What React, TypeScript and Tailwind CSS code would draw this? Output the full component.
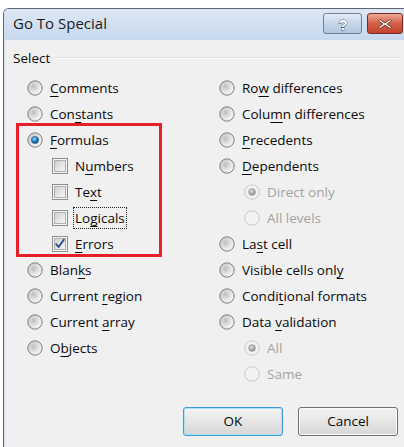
import type { ReactNode } from 'react';

type Opt = { label: string; checked?: boolean; disabled?: boolean; nested?: boolean; focus?: boolean };

// "&" marks the access key letter, as in Win32 resource strings
function AccessLabel({ text }: { text: string }) {
  const i = text.indexOf('&');
  if (i < 0) return <>{text}</>;
  return (
    <>
      {text.slice(0, i)}
      <span className="underline decoration-1 underline-offset-[3px]">{text[i + 1]}</span>
      {text.slice(i + 2)}
    </>
  );
}

function RadioMark({ checked, disabled }: { checked?: boolean; disabled?: boolean }) {
  return (
    <svg width="16" height="16" viewBox="0 0 16 16" className="shrink-0">
      <circle cx="8" cy="8" r="7.2" fill={disabled ? '#f4f4f4' : 'url(#rbFace)'} stroke={disabled ? '#c9c9c9' : '#7f8080'} strokeWidth="1" />
      <circle cx="8" cy="8" r="5.4" fill={disabled ? '#f2f2f2' : 'url(#rbInner)'} />
      {checked && !disabled && <circle cx="8" cy="8" r="3.6" fill="url(#rbDot)" stroke="#1c4d7e" strokeWidth="0.6" />}
      {checked && disabled && <circle cx="8" cy="8" r="3.4" fill="url(#rbDotOff)" stroke="#8a8a8a" strokeWidth="0.5" />}
    </svg>
  );
}

function CheckMark({ checked }: { checked?: boolean }) {
  return (
    <svg width="16" height="16" viewBox="0 0 16 16" className="shrink-0">
      <rect x="0.5" y="0.5" width="15" height="15" fill="#f4f4f4" stroke="#8e8f8f" />
      <rect x="2.5" y="2.5" width="11" height="11" fill="url(#cbFace)" stroke="#aeb0b2" strokeWidth="1" />
      {checked && (
        <path d="M4.2 8.2 L6.6 11 L11.8 3.8" fill="none" stroke="#2a4c8c" strokeWidth="1.9" strokeLinecap="round" strokeLinejoin="round" />
      )}
    </svg>
  );
}

function Row({ children, nested }: { children: ReactNode; nested?: boolean }) {
  return <div className={`flex h-[26px] items-center ${nested ? 'pl-[25px]' : ''}`}>{children}</div>;
}

function RadioRow({ opt }: { opt: Opt }) {
  return (
    <Row nested={opt.nested}>
      <RadioMark checked={opt.checked} disabled={opt.disabled} />
      <span className={`ml-[7px] ${opt.disabled ? 'text-[#a3a3a3]' : 'text-[#0a0a0a]'}`}>
        <AccessLabel text={opt.label} />
      </span>
    </Row>
  );
}

function CheckRow({ opt }: { opt: Opt }) {
  return (
    <Row nested>
      <CheckMark checked={opt.checked} />
      <span className={`ml-[6px] px-[1px] text-[#0a0a0a] ${opt.focus ? 'outline outline-1 outline-dotted outline-[#222]' : ''}`}>
        <AccessLabel text={opt.label} />
      </span>
    </Row>
  );
}

const leftTop: Opt[] = [{ label: '&Comments' }, { label: 'Con&stants' }, { label: '&Formulas', checked: true }];
const formulaKinds: Opt[] = [
  { label: 'N&umbers' },
  { label: 'Te&xt' },
  { label: 'Lo&gicals', focus: true },
  { label: '&Errors', checked: true },
];
const leftBottom: Opt[] = [{ label: 'Blan&ks' }, { label: 'Current &region' }, { label: 'Current &array' }, { label: 'O&bjects' }];

const rightCol: Opt[] = [
  { label: 'Ro&w differences' },
  { label: 'Colu&mn differences' },
  { label: '&Precedents' },
  { label: '&Dependents' },
  { label: 'Direct only', nested: true, disabled: true, checked: true },
  { label: 'All levels', nested: true, disabled: true },
  { label: 'La&st cell' },
  { label: 'Visible cells onl&y' },
  { label: 'Condi&tional formats' },
  { label: 'Data &validation' },
  { label: 'All', nested: true, disabled: true, checked: true },
  { label: 'Same', nested: true, disabled: true },
];

function SharedDefs() {
  return (
    <svg width="0" height="0" className="absolute">
      <defs>
        <linearGradient id="rbFace" x1="0" y1="0" x2="1" y2="1">
          <stop offset="0" stopColor="#c4c4c4" />
          <stop offset="1" stopColor="#f8f8f8" />
        </linearGradient>
        <radialGradient id="rbInner" cx="0.35" cy="0.35" r="0.75">
          <stop offset="0" stopColor="#bdbdbd" />
          <stop offset="0.55" stopColor="#dedede" />
          <stop offset="1" stopColor="#f7f7f7" />
        </radialGradient>
        <radialGradient id="rbDot" cx="0.4" cy="0.35" r="0.7">
          <stop offset="0" stopColor="#a6e2ff" />
          <stop offset="0.45" stopColor="#2a8ad0" />
          <stop offset="1" stopColor="#0c3f73" />
        </radialGradient>
        <radialGradient id="rbDotOff" cx="0.4" cy="0.35" r="0.7">
          <stop offset="0" stopColor="#dcdcdc" />
          <stop offset="1" stopColor="#8c8c8c" />
        </radialGradient>
        <linearGradient id="cbFace" x1="0" y1="0" x2="1" y2="1">
          <stop offset="0" stopColor="#cfcfcf" />
          <stop offset="1" stopColor="#f7f7f7" />
        </linearGradient>
      </defs>
    </svg>
  );
}

function CaptionButtons() {
  return (
    <div className="flex gap-[5px] pt-[4px]">
      <div className="flex h-[21px] w-[39px] items-center justify-center rounded-[3px] border border-[#6e7f93] bg-gradient-to-b from-[#e3ecf6] via-[#c6d5e7] to-[#b3c6dd]">
        <svg width="14" height="16" viewBox="0 0 14 16">
          <text x="7" y="13.5" textAnchor="middle" fontFamily="'Liberation Sans', sans-serif" fontWeight="700" fontSize="15" fill="#ffffff" stroke="#3e4c5e" strokeWidth="0.9" paintOrder="stroke">
            ?
          </text>
        </svg>
      </div>
      <div className="flex h-[21px] w-[36px] items-center justify-center rounded-[3px] border border-[#7a2a22] bg-gradient-to-b from-[#e9a898] via-[#d35f48] to-[#c2432d]">
        <svg width="16" height="12" viewBox="0 0 16 12">
          <path d="M3 1.5 L8 5 L13 1.5 L14.5 3 L10 6 L14.5 9 L13 10.5 L8 7 L3 10.5 L1.5 9 L6 6 L1.5 3 Z" fill="#fff" stroke="#5c231b" strokeWidth="0.8" strokeLinejoin="round" />
        </svg>
      </div>
    </div>
  );
}

function DialogButton({ label, primary }: { label: string; primary?: boolean }) {
  return (
    <div
      className={`flex h-[29px] w-[100px] items-center justify-center rounded-[3px] border bg-gradient-to-b from-[#f3f3f3] via-[#e6e6e6] to-[#d6d6d6] text-[#0a0a0a] ${
        primary ? 'border-[#3c9ad6] shadow-[inset_0_0_0_1px_#a9e1fb]' : 'border-[#707070] shadow-[inset_0_0_0_1px_#fbfbfb]'
      }`}
    >
      {label}
    </div>
  );
}

export default function App() {
  return (
    <div className="relative h-[447px] w-[404px] overflow-hidden bg-white font-['Open_Sans','Noto_Sans',sans-serif] text-[13.5px]">
      <SharedDefs />
      <div className="ml-[3px] mt-[8px] h-[439px] overflow-hidden rounded-tl-[6px] border-l border-t border-[#5b6573]">
        {/* caption */}
        <div className="flex h-[31px] items-start justify-between bg-gradient-to-b from-[#dbe7f4] to-[#c8d9ed] pl-[9px] pr-[1px]">
          <span className="pt-[3px] text-[15px] text-[#1a1a1a]">Go To Special</span>
          <CaptionButtons />
        </div>

        {/* client area */}
        <div className="h-full border-l border-[#cfdcea] bg-[#f0f0f0]">
          <div className="box-content flex h-[20px] items-center pl-[8px] pt-[8px]">
            <span className="text-[#0a0a0a]">Select</span>
            <div className="ml-[6px] mr-[5px] flex-1 border-b border-t border-b-white border-t-[#d5dde4]" />
          </div>

          <div className="mt-[7px] grid grid-cols-[214px_1fr]">
            <div className="pl-[22px]">
              {leftTop.map((o) => (
                <RadioRow key={o.label} opt={o} />
              ))}
              {formulaKinds.map((o) => (
                <CheckRow key={o.label} opt={o} />
              ))}
              {leftBottom.map((o) => (
                <RadioRow key={o.label} opt={o} />
              ))}
            </div>
            <div>
              {rightCol.map((o) => (
                <RadioRow key={o.label} opt={o} />
              ))}
            </div>
          </div>

          <div className="mt-[20px] flex justify-end gap-[15px] pr-[6px]">
            <DialogButton label="OK" primary />
            <DialogButton label="Cancel" />
          </div>
        </div>
      </div>

      {/* red callout around the Formulas options */}
      <div className="pointer-events-none absolute left-[16px] top-[123px] h-[134px] w-[146px] border-[3px] border-[#e5202b]" />
    </div>
  );
}
